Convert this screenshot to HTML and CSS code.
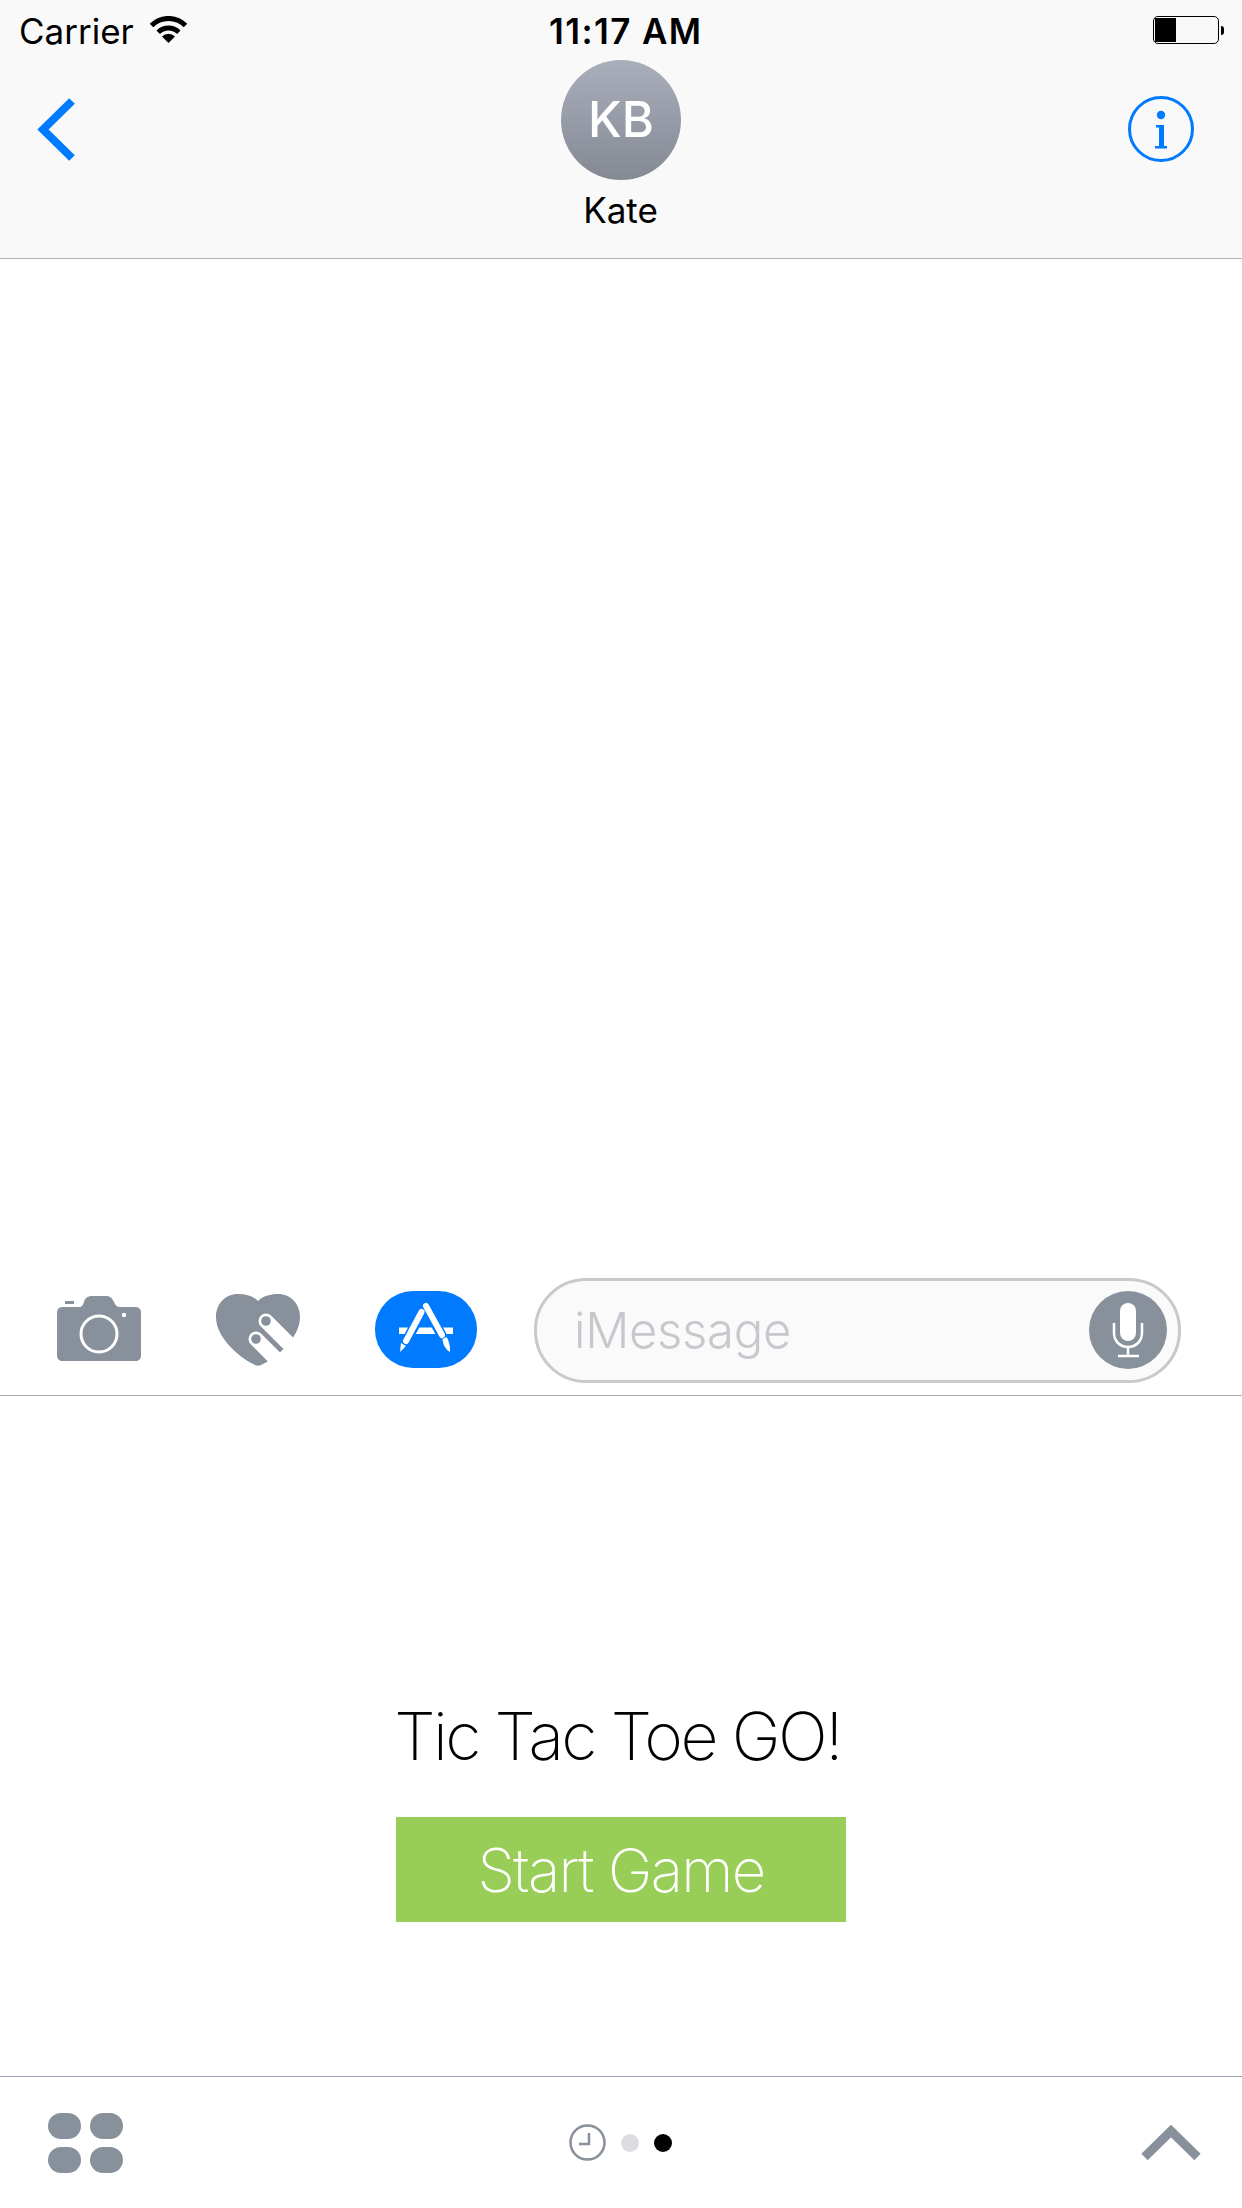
FILE: index.html
```html
<!DOCTYPE html>
<html lang="en">
<head>
    <meta charset="UTF-8">
    <meta name="viewport" content="width=device-width, initial-scale=1.0">
    <title>Tic Tac Toe GO!</title>
    <link rel="stylesheet" href="styles.css">
</head>
<body>
    <div class="phone">
        <header class="top-bar">
            <div class="status-bar">
                <div class="status-left">
                    <span class="carrier">Carrier</span>
                    <svg class="wifi" width="37" height="27" viewBox="0 0 37 27">
                        <path d="M1.5 9.5a24 24 0 0 1 34 0M8.2 16.2a14.5 14.5 0 0 1 20.6 0" fill="none" stroke="#000" stroke-width="5"/>
                        <path d="M18.5 27L12 20.5a9.2 9.2 0 0 1 13 0z" fill="#000"/>
                    </svg>
                </div>
                <span class="clock-time">11:17 AM</span>
                <div class="status-right">
                    <div class="battery"><div class="battery-level"></div></div>
                    <div class="battery-nub"></div>
                </div>
            </div>
            <nav class="nav-bar">
                <svg class="back-icon" width="38" height="63" viewBox="0 0 38 63">
                    <path d="M35 3L6 31.5 35 60" fill="none" stroke="#007aff" stroke-width="8"/>
                </svg>
                <div class="contact">
                    <div class="avatar">KB</div>
                    <div class="contact-name">Kate</div>
                </div>
                <svg class="info-icon" width="66" height="66" viewBox="0 0 66 66">
                    <circle cx="33" cy="33" r="31.5" fill="none" stroke="#007aff" stroke-width="3"/>
                    <circle cx="33" cy="19" r="4.2" fill="#007aff"/>
                    <path d="M28 29h8v21h3v2.500H27V50h4V31.500h-3z" fill="#007aff"/>
                </svg>
            </nav>
        </header>

        <main class="conversation"></main>

        <section class="compose-bar">
            <svg class="camera-icon" width="84" height="66" viewBox="0 0 84 66">
                <path d="M6 12h16c3 0 4-2 5-5 1-4 4-6 8-6h14c4 0 6 2 8 6 1 3 3 5 6 5h15c4 0 6 2 6 6v42c0 4-2 6-6 6H6c-4 0-6-2-6-6V18c0-4 2-6 6-6z" fill="#88909b"/>
                <rect x="8" y="6" width="9" height="3" fill="#88909b"/>
                <circle cx="42" cy="39" r="18" fill="none" stroke="#fff" stroke-width="3"/>
                <circle cx="67" cy="20" r="2.200" fill="#fff"/>
            </svg>
            <svg class="heart-icon" width="84" height="72" viewBox="0 0 84 72">
                <path d="M42 7C37 2 30 0 22 0 9 0 0 10 0 23c0 20 22 40 39 48 2 1 4 1 6 0 19-9 39-29 39-48C84 10 75 0 62 0 54 0 47 2 42 7z" fill="#88909b"/>
                <path d="M50 27l42 42M40 45l40 40" stroke="#fff" stroke-width="15" stroke-linecap="round"/>
                <circle cx="50" cy="27" r="4.800" fill="#88909b"/>
                <circle cx="40" cy="45" r="4.800" fill="#88909b"/>
            </svg>
            <svg class="store-icon" width="102" height="77" viewBox="0 0 102 77">
                <rect width="102" height="77" rx="38" fill="#007aff"/>
                <rect x="24" y="36.500" width="54" height="6.500" fill="#fff"/>
                <path d="M26 60l21-39M51 15l24 45" stroke="#007aff" stroke-width="10"/>
                <path d="M31 50L46.500 21" stroke="#fff" stroke-width="6" stroke-linecap="round"/>
                <path d="M25 61l1-9 5 3z" fill="#fff"/>
                <path d="M51 15l16 29" stroke="#fff" stroke-width="6" stroke-linecap="round"/>
                <path d="M67.500 48l4-2c2 3 4 9 3.500 15-4-2-7-7-7.500-13z" fill="#fff"/>
            </svg>
            <div class="message-input">
                <span class="placeholder">iMessage</span>
                <svg class="mic-icon" width="78" height="78" viewBox="0 0 78 78">
                    <circle cx="39" cy="39" r="39" fill="#88909b"/>
                    <rect x="31" y="12" width="16" height="38" rx="8" fill="#fff"/>
                    <path d="M25 32v10c0 8 6 14 14 14s14-6 14-14V32M39 56v8M29 65h21" fill="none" stroke="#fff" stroke-width="2.500"/>
                </svg>
            </div>
        </section>

        <section class="game-panel">
            <h1 class="game-title">Tic Tac Toe GO!</h1>
            <button type="button" class="start-btn">Start Game</button>
        </section>

        <footer class="tray">
            <div class="app-grid">
                <span></span><span></span><span></span><span></span>
            </div>
            <div class="page-dots">
                <svg class="recent-icon" width="37" height="37" viewBox="0 0 37 37">
                    <circle cx="18.500" cy="18.500" r="17" fill="none" stroke="#88909b" stroke-width="2.500"/>
                    <path d="M20 9v11h-10" fill="none" stroke="#88909b" stroke-width="2.500"/>
                </svg>
                <span class="dot"></span>
                <span class="dot dot-active"></span>
            </div>
            <svg class="expand-icon" width="60" height="35" viewBox="0 0 60 35">
                <path d="M3.500 32L30 6l26.500 26" fill="none" stroke="#88909b" stroke-width="9"/>
            </svg>
        </footer>
    </div>
</body>
</html>
```

FILE: styles.css
```css
* {
    box-sizing: border-box;
}
body {
    margin: 0;
    background: #fff;
    font-family: Inter, "Liberation Sans", sans-serif;
}
.phone {
    width: 1242px;
    height: 2208px;
    display: flex;
    flex-direction: column;
    overflow: hidden;
}

/* top */
.top-bar {
    height: 259px;
    background: #f9f9f9;
    border-bottom: 1px solid #b2b2b2;
}
.status-bar {
    height: 60px;
    display: grid;
    grid-template-columns: 549px auto 1fr;
    align-items: start;
    font-size: 35px;
    color: #000;
}
.status-left {
    display: flex;
    align-items: flex-start;
    padding: 11px 0 0 19px;
    line-height: 40px;
}
.wifi {
    margin: 5px 0 0 16px;
}
.clock-time {
    font-weight: 600;
    letter-spacing: 1.4px;
    line-height: 40px;
    padding-top: 11px;
}
.status-right {
    display: flex;
    justify-content: flex-end;
    align-items: center;
    padding: 16px 18px 0 0;
}
.battery {
    width: 66px;
    height: 28px;
    border: 1.5px solid #000;
    border-radius: 5px;
    padding: 1px;
}
.battery-level {
    width: 21px;
    height: 100%;
    background: #000;
}
.battery-nub {
    width: 3px;
    height: 9px;
    margin-left: 2px;
    background: #000;
    border-radius: 0 3px 3px 0;
}
.nav-bar {
    display: grid;
    grid-template-columns: 1fr auto 1fr;
    align-items: start;
    padding: 0 37px;
}
.back-icon {
    margin-top: 38px;
}
.info-icon {
    margin: 36px 11px 0 0;
    justify-self: end;
}
.contact {
    display: flex;
    flex-direction: column;
    align-items: center;
}
.avatar {
    width: 120px;
    height: 120px;
    border-radius: 50%;
    background: linear-gradient(#a9aebb, #858994);
    color: #fff;
    font-size: 49px;
    font-weight: 500;
    line-height: 120px;
    text-align: center;
}
.contact-name {
    font-size: 35px;
    line-height: 40px;
    margin: 10px 1px 0 0;
    color: #000;
}

/* conversation */
.conversation {
    flex: 1;
    background: #fff;
}

/* compose */
.compose-bar {
    height: 131px;
    display: flex;
    align-items: center;
    padding-left: 57px;
    border-bottom: 1px solid #a8a8ae;
}
.camera-icon {
    margin: 0 75px 4px 0;
}
.heart-icon {
    margin-right: 75px;
}
.store-icon {
    margin: 0 57px 2px 0;
}
.message-input {
    width: 647px;
    height: 105px;
    display: flex;
    align-items: center;
    justify-content: space-between;
    padding: 0 11px 0 37px;
    background: #fafafa;
    border: 3px solid #c8c8cd;
    border-radius: 52px;
}
.placeholder {
    font-size: 49px;
    font-weight: 350;
    letter-spacing: -0.3px;
    color: #c7c7cd;
}

/* game */
.game-panel {
    flex: 0 0 680px;
    display: flex;
    flex-direction: column;
    align-items: center;
    padding-top: 300px;
}
.game-title {
    margin: 0 7px 0 0;
    font-size: 66px;
    font-weight: 200;
    letter-spacing: -2.6px;
    line-height: 80px;
    color: #000;
}
.start-btn {
    width: 450px;
    height: 105px;
    margin-top: 41px;
    padding: 0;
    border: none;
    background: #98ce58;
    color: #fff;
    font-family: inherit;
    font-size: 60px;
    font-weight: 200;
    letter-spacing: -1.7px;
}

/* bottom tray */
.tray {
    flex: 0 0 132px;
    display: grid;
    grid-template-columns: 1fr auto 1fr;
    align-items: center;
    padding: 0 41px 0 48px;
    border-top: 1px solid #9aa3b0;
}
.app-grid {
    display: grid;
    grid-template-columns: 33px 33px;
    grid-auto-rows: 26px;
    gap: 8px 9px;
}
.app-grid span {
    background: #88909b;
    border-radius: 13px;
}
.page-dots {
    display: flex;
    align-items: center;
    margin-right: 8px;
}
.dot {
    width: 18px;
    height: 18px;
    margin-left: 15px;
    border-radius: 50%;
    background: #dcdde0;
}
.dot-active {
    background: #000;
}
.expand-icon {
    justify-self: end;
}
```
